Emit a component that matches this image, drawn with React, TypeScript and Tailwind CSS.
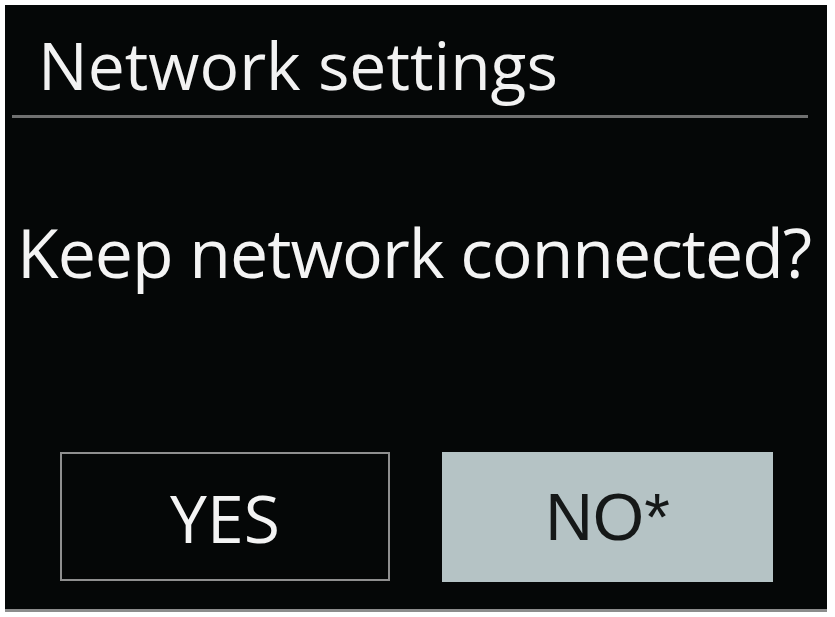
export default function App() {
  return (
    <div className="min-h-screen bg-white" style={{ fontFamily: '"Open Sans", "Noto Sans", sans-serif' }}>
      <div className="ml-[5px] pt-[5px]">
        <div className="flex h-[607px] w-[822px] flex-col border-b-[3px] border-[#8c8c8c] bg-[#050707]">
          {/* title */}
          <div className="flex h-[110px] items-end pl-[33px] pb-[18px]">
            <span className="text-[66px] leading-none text-[#f2f2f2]">Network settings</span>
          </div>
          <div className="ml-[7px] h-[3px] w-[796px] bg-[#707070]" />

          {/* question */}
          <div className="flex h-[334px] flex-col pl-[12px] pt-[100px]">
            <span className="text-[68px] leading-none tracking-[-1px] text-[#f4f4f4]">Keep network connected?</span>
          </div>

          {/* buttons */}
          <div className="flex gap-[52px] pl-[55px]">
            <div className="flex h-[129px] w-[330px] items-center justify-center border-2 border-[#8f8f8f]">
              <span className="text-[66px] leading-none text-[#f4f4f4]">YES</span>
            </div>
            <div className="flex h-[130px] w-[331px] items-center justify-center bg-[#b5c3c5]">
              <span className="font-['Liberation_Sans',Arial,sans-serif] text-[66px] leading-none text-[#151818]">NO*</span>
            </div>
          </div>
        </div>
      </div>
    </div>
  )
}
